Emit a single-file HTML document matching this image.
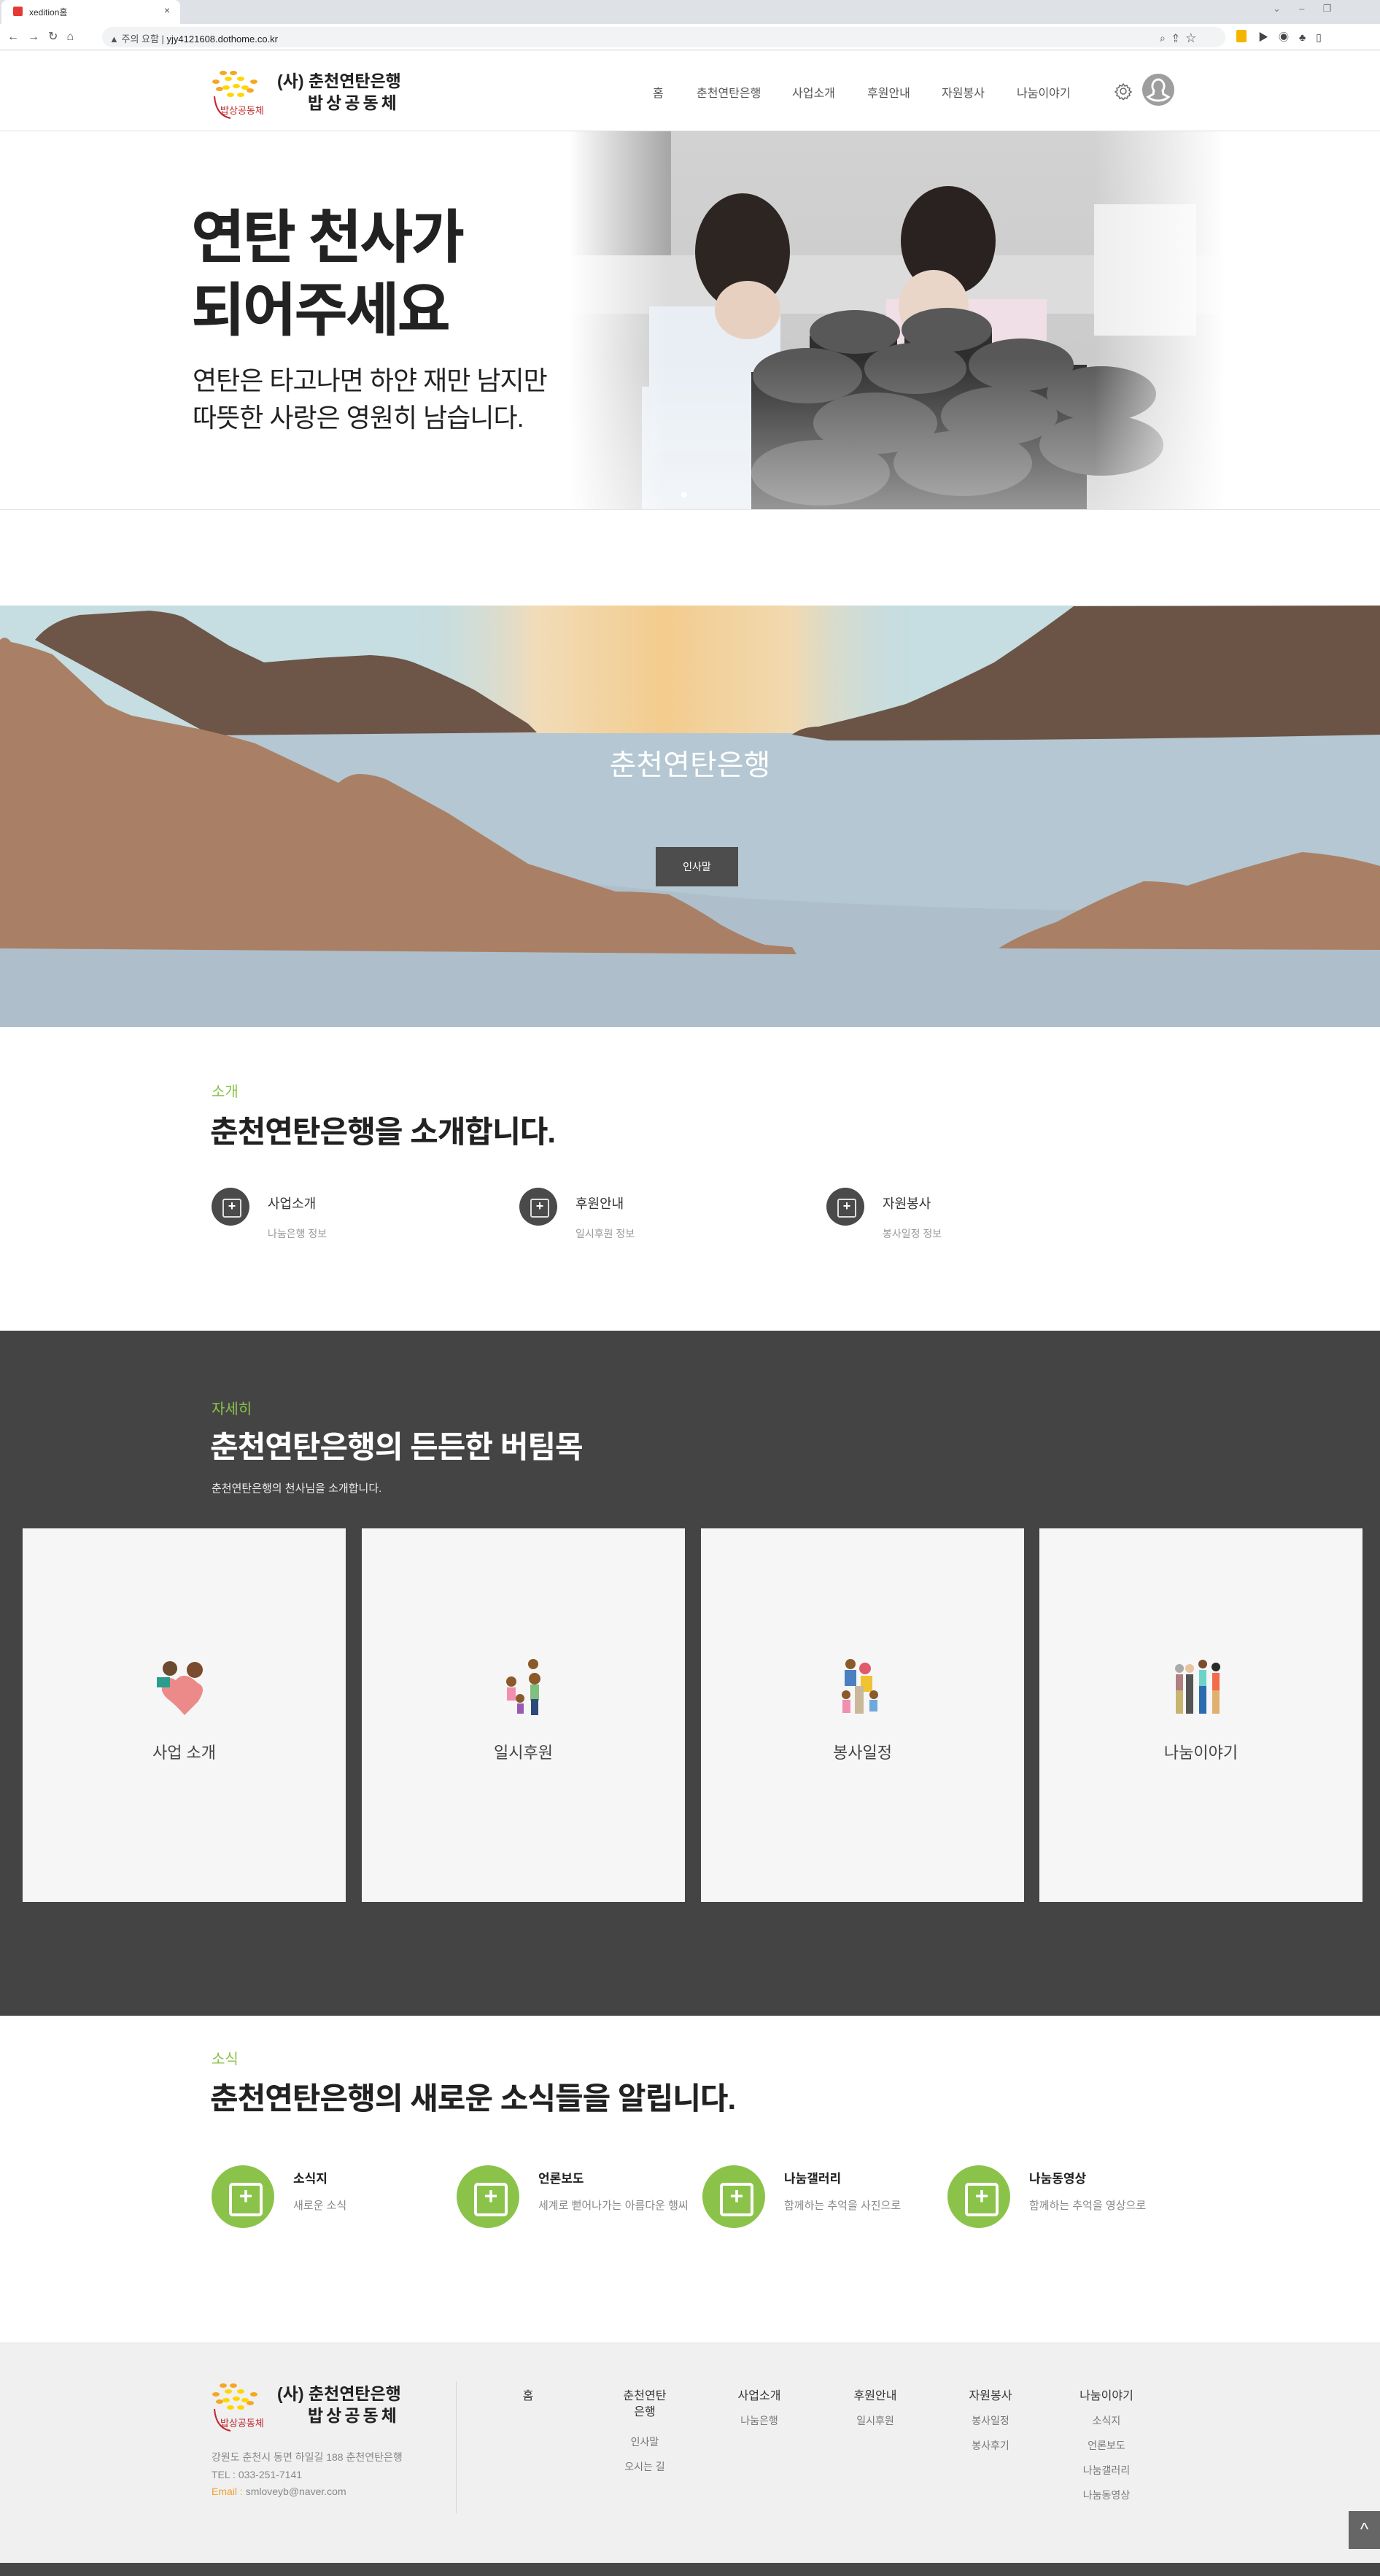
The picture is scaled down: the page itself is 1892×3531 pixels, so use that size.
<!DOCTYPE html>
<html><head><meta charset="utf-8">
<style>
*{margin:0;padding:0;box-sizing:border-box}
body{width:1892px;height:3531px;position:relative;background:#fff;font-family:"Liberation Sans","Noto Sans CJK KR",sans-serif;overflow:hidden;color:#222}
.a{position:absolute}
.nav{font-size:16px;color:#555;top:114px}
.g{color:#8bc34a}
.h2{font-size:42px;font-weight:bold;letter-spacing:-1px}
.ic{width:52px;height:52px;border-radius:50%;background:#4a4a4a}
.ic:after{content:"+";position:absolute;left:15px;top:15px;width:22px;height:22px;border:2px solid #ddd;border-radius:3px;color:#fff;font-size:18px;line-height:17px;text-align:center;font-weight:bold}
.gc{width:86px;height:86px;border-radius:50%;background:#8bc34a}
.gc:after{content:"+";position:absolute;left:24px;top:24px;width:38px;height:38px;border:4px solid #fff;border-radius:5px;color:#fff;font-size:32px;line-height:28px;text-align:center;font-weight:bold}
.card{top:2095px;width:443px;height:512px;background:#f6f6f6}
.card span{position:absolute;left:0;right:0;top:290px;text-align:center;font-size:22px;color:#444}
.fc{width:100px;text-align:center;font-size:14px;color:#777;line-height:34px}
.fc b{display:block;font-size:16px;color:#333;font-weight:normal;line-height:22px;margin-bottom:21px}
</style></head><body>
<!-- browser chrome -->
<div class="a" style="left:0;top:0;width:1892px;height:33px;background:#dee1e6"></div>
<div class="a" style="left:2px;top:0;width:245px;height:33px;background:#fff;border-radius:8px 8px 0 0"></div>
<div class="a" style="left:18px;top:9px;width:13px;height:13px;background:#e53935;border-radius:2px"></div>
<div class="a" style="left:40px;top:8px;font-size:12px;color:#333">xedition홈</div>
<div class="a" style="left:225px;top:6px;font-size:14px;color:#555">×</div>
<div class="a" style="left:1745px;top:4px;font-size:13px;color:#777">⌄ &nbsp;&nbsp;&nbsp;&nbsp;&nbsp; – &nbsp;&nbsp;&nbsp;&nbsp;&nbsp; ❐</div>
<div class="a" style="left:0;top:33px;width:1892px;height:36px;background:#fff;border-bottom:1px solid #ccc"></div>
<div class="a" style="left:10px;top:40px;font-size:16px;color:#555;letter-spacing:12px">←→↻⌂</div>
<div class="a" style="left:140px;top:37px;width:1540px;height:28px;background:#f1f3f4;border-radius:14px"></div>
<div class="a" style="left:150px;top:43px;font-size:13px;color:#555">▲ 주의 요함 | <span style="color:#222">yjy4121608.dothome.co.kr</span></div>
<div class="a" style="left:1590px;top:42px;font-size:14px;color:#555;letter-spacing:10px">⌕⇪☆</div>
<div class="a" style="left:1695px;top:41px;width:14px;height:17px;background:#f4b400;border-radius:2px"></div>
<div class="a" style="left:1725px;top:41px;font-size:14px;color:#444;letter-spacing:14px">▶◉♣▯</div>
<!-- header -->
<div class="a" style="left:0;top:179px;width:1892px;height:1px;background:#ddd"></div>
<svg class="a" style="left:288px;top:92px" width="82" height="72" viewBox="0 0 82 72">
<g fill="#f5a623"><ellipse cx="18" cy="8" rx="5" ry="3"/><ellipse cx="32" cy="8" rx="5" ry="3"/><ellipse cx="8" cy="20" rx="5" ry="3"/><ellipse cx="60" cy="20" rx="5" ry="3"/><ellipse cx="13" cy="30" rx="5" ry="3"/><ellipse cx="55" cy="32" rx="5" ry="3"/></g>
<g fill="#ffd600"><ellipse cx="25" cy="16" rx="5" ry="3"/><ellipse cx="42" cy="16" rx="5" ry="3"/><ellipse cx="22" cy="28" rx="5" ry="3"/><ellipse cx="36" cy="26" rx="5" ry="3"/><ellipse cx="48" cy="28" rx="5" ry="3"/><ellipse cx="28" cy="38" rx="5" ry="3"/><ellipse cx="42" cy="38" rx="5" ry="3"/></g>
<path d="M6 40 Q8 66 28 70" stroke="#c0282d" stroke-width="2" fill="none"/>
<text x="14" y="64" font-size="13" fill="#c0282d" font-family="Noto Sans CJK KR">밥상공동체</text></svg>
<div class="a" style="left:380px;top:96px;font-size:23px;font-weight:bold;color:#222;line-height:30px">(사) 춘천연탄은행<br><span style="padding-left:42px;letter-spacing:4px">밥상공동체</span></div>
<div class="a nav" style="left:895px">홈</div>
<div class="a nav" style="left:955px">춘천연탄은행</div>
<div class="a nav" style="left:1086px">사업소개</div>
<div class="a nav" style="left:1189px">후원안내</div>
<div class="a nav" style="left:1291px">자원봉사</div>
<div class="a nav" style="left:1394px">나눔이야기</div>
<svg class="a" style="left:1528px;top:113px" width="24" height="24" viewBox="0 0 24 24"><path d="M12 2l2 3 3-1 1 3 3 1-1 3 3 2-3 2 1 3-3 1-1 3-3-1-2 3-2-3-3 1-1-3-3-1 1-3-3-2 3-2-1-3 3-1 1-3 3 1z" fill="none" stroke="#666" stroke-width="1.5"/><circle cx="12" cy="12" r="4" fill="none" stroke="#666" stroke-width="1.5"/></svg>
<svg class="a" style="left:1566px;top:101px" width="44" height="44" viewBox="0 0 44 44"><circle cx="22" cy="22" r="22" fill="#9e9e9e"/><path d="M22 8a8 9 0 0 0-6 15l-1 5-7 4a22 22 0 0 0 28 0l-7-4-1-5a8 9 0 0 0-6-15z" fill="none" stroke="#fff" stroke-width="3"/></svg>
<!-- hero -->
<svg class="a" style="left:780px;top:180px" width="900" height="519" viewBox="0 0 900 519">
<defs>
<linearGradient id="fl" x1="0" y1="0" x2="1" y2="0"><stop offset="0" stop-color="#fff"/><stop offset="0.15" stop-color="#fff" stop-opacity="0"/><stop offset="0.8" stop-color="#fff" stop-opacity="0"/><stop offset="1" stop-color="#fff"/></linearGradient>
<linearGradient id="fb" x1="0" y1="0" x2="0" y2="1"><stop offset="0.6" stop-color="#fff" stop-opacity="0"/><stop offset="1" stop-color="#fff" stop-opacity="0.5"/></linearGradient>
<linearGradient id="wl" x1="0" y1="0" x2="0" y2="1"><stop offset="0" stop-color="#d2d2d2"/><stop offset="1" stop-color="#c6c6c6"/></linearGradient></defs>
<rect width="900" height="519" fill="url(#wl)"/>
<rect x="0" y="0" width="140" height="170" fill="#a8a8a8"/>
<rect x="0" y="170" width="900" height="80" fill="#dcdcdc"/>
<rect x="720" y="100" width="140" height="180" fill="#eee"/>
<rect x="100" y="350" width="200" height="170" fill="#e6ecf2"/>
<rect x="110" y="240" width="180" height="200" fill="#e8eef4"/>
<ellipse cx="238" cy="165" rx="65" ry="80" fill="#2d2522"/>
<ellipse cx="245" cy="245" rx="45" ry="40" fill="#e8d0c0"/>
<rect x="435" y="230" width="220" height="240" fill="#f0dfe6"/>
<ellipse cx="520" cy="150" rx="65" ry="75" fill="#2a2220"/>
<ellipse cx="500" cy="240" rx="48" ry="50" fill="#ead6c8"/>
<g fill="#2e2e2e"><rect x="330" y="280" width="120" height="120"/><rect x="460" y="270" width="120" height="140"/><rect x="250" y="330" width="150" height="190"/><rect x="400" y="330" width="170" height="190"/><rect x="560" y="320" width="150" height="200"/></g>
<g fill="#585858"><ellipse cx="392" cy="275" rx="62" ry="30"/><ellipse cx="518" cy="272" rx="62" ry="30"/><ellipse cx="327" cy="335" rx="75" ry="38"/><ellipse cx="475" cy="325" rx="70" ry="35"/><ellipse cx="620" cy="320" rx="72" ry="36"/><ellipse cx="420" cy="400" rx="85" ry="42"/><ellipse cx="590" cy="390" rx="80" ry="40"/><ellipse cx="730" cy="360" rx="75" ry="38"/><ellipse cx="345" cy="468" rx="95" ry="45"/><ellipse cx="540" cy="455" rx="95" ry="45"/><ellipse cx="730" cy="430" rx="85" ry="42"/></g>
<rect width="900" height="519" fill="url(#fb)"/>
<rect width="900" height="519" fill="url(#fl)"/>
<circle cx="158" cy="498" r="4" fill="#fff"/>
</svg>
<div class="a" style="left:262px;top:276px;font-size:80px;font-weight:bold;color:#222;line-height:100px;letter-spacing:-3px">연탄 천사가<br>되어주세요</div>
<div class="a" style="left:264px;top:496px;font-size:36px;color:#222;line-height:51px;letter-spacing:-1px">연탄은 타고나면 하얀 재만 남지만<br>따뜻한 사랑은 영원히 남습니다.</div>
<div class="a" style="left:0;top:698px;width:1892px;height:1px;background:#e5e5e5"></div>
<!-- landscape banner (page coords, offset 830) -->
<svg class="a" style="left:0;top:830px" width="1892" height="578" viewBox="0 830 1892 578">
<defs>
<linearGradient id="sun" x1="0" y1="0" x2="1" y2="0"><stop offset="0" stop-color="#c6dde1" stop-opacity="0"/><stop offset="0.25" stop-color="#f1dcb8"/><stop offset="0.5" stop-color="#f3cc8e"/><stop offset="0.75" stop-color="#f1d9b0"/><stop offset="1" stop-color="#c6dde1" stop-opacity="0"/></linearGradient>
<linearGradient id="sunv" x1="0" y1="0" x2="0" y2="1"><stop offset="0" stop-color="#fff" stop-opacity="0"/><stop offset="1" stop-color="#fff" stop-opacity="0"/></linearGradient>
</defs>
<rect x="0" y="830" width="1892" height="578" fill="#b4c7d2"/>
<rect x="0" y="830" width="1892" height="175" fill="#c6dde1"/>
<rect x="560" y="830" width="700" height="175" fill="url(#sun)"/>
<path d="M0 1150 Q500 1180 1000 1230 Q1500 1260 1892 1240 L1892 1408 L0 1408Z" fill="#aebfcb"/>
<path d="M48 877 Q70 850 109 843 L205 837 Q240 840 253 847 Q290 870 314 885 L362 908 L434 902 L507 898 Q545 900 567 908 Q610 925 651 946 L724 992 L736 1004 L290 1008Z" fill="#6d5548"/>
<path d="M1086 1007 Q1100 996 1122 996 Q1190 980 1242 965 Q1300 940 1363 908 Q1420 870 1472 831 L1892 830 L1892 1007 Q1500 1015 1134 1015Z" fill="#6b5446"/>
<path d="M0 877 Q8 870 15 880 Q40 885 72 897 L145 965 Q165 975 181 981 L277 1000 Q320 1010 350 1019 L464 1073 Q480 1060 495 1061 Q515 1062 531 1069 L615 1115 Q670 1150 724 1184 L844 1222 Q880 1222 917 1226 Q955 1245 989 1268 Q1030 1290 1049 1295 Q1080 1298 1086 1298 L1092 1308 L0 1300Z" fill="#a98065"/>
<path d="M1369 1300 Q1400 1280 1448 1264 Q1510 1230 1568 1208 Q1600 1208 1628 1214 Q1700 1190 1785 1168 Q1840 1172 1892 1187 L1892 1302Z" fill="#a98065"/>
</svg>
<div class="a" style="left:0;top:1016px;width:1892px;text-align:center;font-size:40px;color:#fff">춘천연탄은행</div>
<div class="a" style="left:899px;top:1161px;width:113px;height:54px;background:#4d4d4d;color:#fff;font-size:14px;text-align:center;line-height:54px">인사말</div>
<!-- intro -->
<div class="a g" style="left:290px;top:1480px;font-size:20px">소개</div>
<div class="a h2" style="left:288px;top:1518px">춘천연탄은행을 소개합니다.</div>
<div class="a ic" style="left:290px;top:1628px"></div>
<div class="a" style="left:367px;top:1636px;font-size:18px;color:#333">사업소개</div>
<div class="a" style="left:367px;top:1681px;font-size:14px;color:#999">나눔은행 정보</div>
<div class="a ic" style="left:712px;top:1628px"></div>
<div class="a" style="left:789px;top:1636px;font-size:18px;color:#333">후원안내</div>
<div class="a" style="left:789px;top:1681px;font-size:14px;color:#999">일시후원 정보</div>
<div class="a ic" style="left:1133px;top:1628px"></div>
<div class="a" style="left:1210px;top:1636px;font-size:18px;color:#333">자원봉사</div>
<div class="a" style="left:1210px;top:1681px;font-size:14px;color:#999">봉사일정 정보</div>
<!-- dark section -->
<div class="a" style="left:0;top:1824px;width:1892px;height:939px;background:#444"></div>
<div class="a g" style="left:290px;top:1915px;font-size:20px">자세히</div>
<div class="a h2" style="left:288px;top:1950px;color:#fff">춘천연탄은행의 든든한 버팀목</div>
<div class="a" style="left:290px;top:2029px;font-size:15px;color:#eee">춘천연탄은행의 천사님을 소개합니다.</div>
<div class="a card" style="left:31px"><svg class="a" style="left:180px;top:178px" width="84" height="78"><circle cx="22" cy="14" r="10" fill="#6b4a2f"/><circle cx="56" cy="16" r="11" fill="#7a4b2f"/><path d="M12 38 Q10 20 30 30 Q42 16 60 34 Q74 40 60 60 Q48 72 42 78 Q30 64 18 55 Q8 45 12 38Z" fill="#ec8a8a"/><rect x="4" y="26" width="18" height="14" fill="#2a9d8f"/></svg><span>사업 소개</span></div>
<div class="a card" style="left:496px"><svg class="a" style="left:185px;top:178px" width="70" height="80"><circle cx="50" cy="8" r="7" fill="#8a5a2b"/><circle cx="52" cy="28" r="8" fill="#8a5a2b"/><rect x="46" y="36" width="12" height="22" fill="#7fbf7f"/><rect x="47" y="56" width="10" height="22" fill="#2c4a7a"/><circle cx="20" cy="32" r="7" fill="#8a5a2b"/><rect x="14" y="40" width="12" height="18" fill="#f28fb0"/><circle cx="32" cy="55" r="6" fill="#8a5a2b"/><rect x="28" y="62" width="9" height="14" fill="#9b59b6"/></svg><span>일시후원</span></div>
<div class="a card" style="left:961px"><svg class="a" style="left:185px;top:178px" width="72" height="80"><circle cx="20" cy="8" r="7" fill="#8a5a2b"/><rect x="12" y="16" width="16" height="22" fill="#4a7fc1"/><circle cx="40" cy="14" r="8" fill="#e05a6a"/><rect x="34" y="24" width="16" height="22" fill="#f1c232"/><circle cx="14" cy="50" r="6" fill="#8a5a2b"/><rect x="9" y="57" width="11" height="18" fill="#f28fb0"/><circle cx="52" cy="50" r="6" fill="#8a5a2b"/><rect x="46" y="57" width="11" height="16" fill="#6fa8dc"/><rect x="26" y="38" width="12" height="38" fill="#c9b99a"/></svg><span>봉사일정</span></div>
<div class="a card" style="left:1425px"><svg class="a" style="left:180px;top:178px" width="80" height="80"><g><circle cx="12" cy="14" r="6" fill="#aaa"/><rect x="7" y="22" width="10" height="54" fill="#c9b370"/><rect x="7" y="22" width="10" height="22" fill="#b08080"/><circle cx="26" cy="14" r="6" fill="#e8c4a0"/><rect x="21" y="22" width="10" height="54" fill="#555"/><circle cx="44" cy="8" r="6" fill="#7a4b2f"/><rect x="39" y="16" width="10" height="60" fill="#2b6cb0"/><rect x="39" y="16" width="10" height="22" fill="#6dd3c8"/><circle cx="62" cy="12" r="6" fill="#2a2a2a"/><rect x="57" y="20" width="10" height="56" fill="#e0b070"/><rect x="57" y="20" width="10" height="24" fill="#f26b4a"/></g></svg><span>나눔이야기</span></div>
<!-- news -->
<div class="a g" style="left:290px;top:2806px;font-size:20px">소식</div>
<div class="a h2" style="left:288px;top:2843px">춘천연탄은행의 새로운 소식들을 알립니다.</div>
<div class="a gc" style="left:290px;top:2968px"></div>
<div class="a" style="left:402px;top:2972px;font-size:17px;font-weight:bold;color:#222">소식지</div>
<div class="a" style="left:402px;top:3012px;font-size:15px;color:#888">새로운 소식</div>
<div class="a gc" style="left:626px;top:2968px"></div>
<div class="a" style="left:738px;top:2972px;font-size:17px;font-weight:bold;color:#222">언론보도</div>
<div class="a" style="left:738px;top:3012px;font-size:15px;color:#888">세계로 뻗어나가는 아름다운 행씨</div>
<div class="a gc" style="left:963px;top:2968px"></div>
<div class="a" style="left:1075px;top:2972px;font-size:17px;font-weight:bold;color:#222">나눔갤러리</div>
<div class="a" style="left:1075px;top:3012px;font-size:15px;color:#888">함께하는 추억을 사진으로</div>
<div class="a gc" style="left:1299px;top:2968px"></div>
<div class="a" style="left:1411px;top:2972px;font-size:17px;font-weight:bold;color:#222">나눔동영상</div>
<div class="a" style="left:1411px;top:3012px;font-size:15px;color:#888">함께하는 추억을 영상으로</div>
<!-- footer -->
<div class="a" style="left:0;top:3211px;width:1892px;height:302px;background:#f0f0f0;border-top:1px solid #e2e2e2"></div>
<svg class="a" style="left:288px;top:3262px" width="82" height="72" viewBox="0 0 82 72">
<g fill="#f5a623"><ellipse cx="18" cy="8" rx="5" ry="3"/><ellipse cx="32" cy="8" rx="5" ry="3"/><ellipse cx="8" cy="20" rx="5" ry="3"/><ellipse cx="60" cy="20" rx="5" ry="3"/><ellipse cx="13" cy="30" rx="5" ry="3"/><ellipse cx="55" cy="32" rx="5" ry="3"/></g>
<g fill="#ffd600"><ellipse cx="25" cy="16" rx="5" ry="3"/><ellipse cx="42" cy="16" rx="5" ry="3"/><ellipse cx="22" cy="28" rx="5" ry="3"/><ellipse cx="36" cy="26" rx="5" ry="3"/><ellipse cx="48" cy="28" rx="5" ry="3"/><ellipse cx="28" cy="38" rx="5" ry="3"/><ellipse cx="42" cy="38" rx="5" ry="3"/></g>
<path d="M6 40 Q8 66 28 70" stroke="#c0282d" stroke-width="2" fill="none"/>
<text x="14" y="64" font-size="13" fill="#c0282d" font-family="Noto Sans CJK KR">밥상공동체</text></svg>
<div class="a" style="left:380px;top:3266px;font-size:23px;font-weight:bold;color:#222;line-height:30px">(사) 춘천연탄은행<br><span style="padding-left:42px;letter-spacing:4px">밥상공동체</span></div>
<div class="a" style="left:290px;top:3357px;font-size:14px;color:#888;line-height:23.5px">강원도 춘천시 동면 하일길 188 춘천연탄은행<br>TEL : 033-251-7141<br><span style="color:#f0a030">Email : </span>smloveyb@naver.com</div>
<div class="a" style="left:625px;top:3264px;width:1px;height:181px;background:#d6d6d6"></div>
<div class="a fc" style="left:674px;top:3274px"><b>홈</b></div>
<div class="a fc" style="left:848px;top:3274px;width:72px"><b style="margin-bottom:12px">춘천연탄은행</b>인사말<br>오시는 길</div>
<div class="a fc" style="left:991px;top:3274px"><b>사업소개</b><span style="position:relative;top:-16px">나눔은행</span></div>
<div class="a fc" style="left:1150px;top:3274px"><b>후원안내</b><span style="position:relative;top:-16px">일시후원</span></div>
<div class="a fc" style="left:1308px;top:3274px"><b>자원봉사</b><div style="margin-top:-16px">봉사일정<br>봉사후기</div></div>
<div class="a fc" style="left:1467px;top:3274px"><b>나눔이야기</b><div style="margin-top:-16px">소식지<br>언론보도<br>나눔갤러리<br>나눔동영상</div></div>
<div class="a" style="left:1849px;top:3442px;width:43px;height:52px;background:#666;color:#fff;font-size:24px;text-align:center;line-height:52px">^</div>
<div class="a" style="left:0;top:3513px;width:1892px;height:18px;background:#474747"></div>
</body></html>
